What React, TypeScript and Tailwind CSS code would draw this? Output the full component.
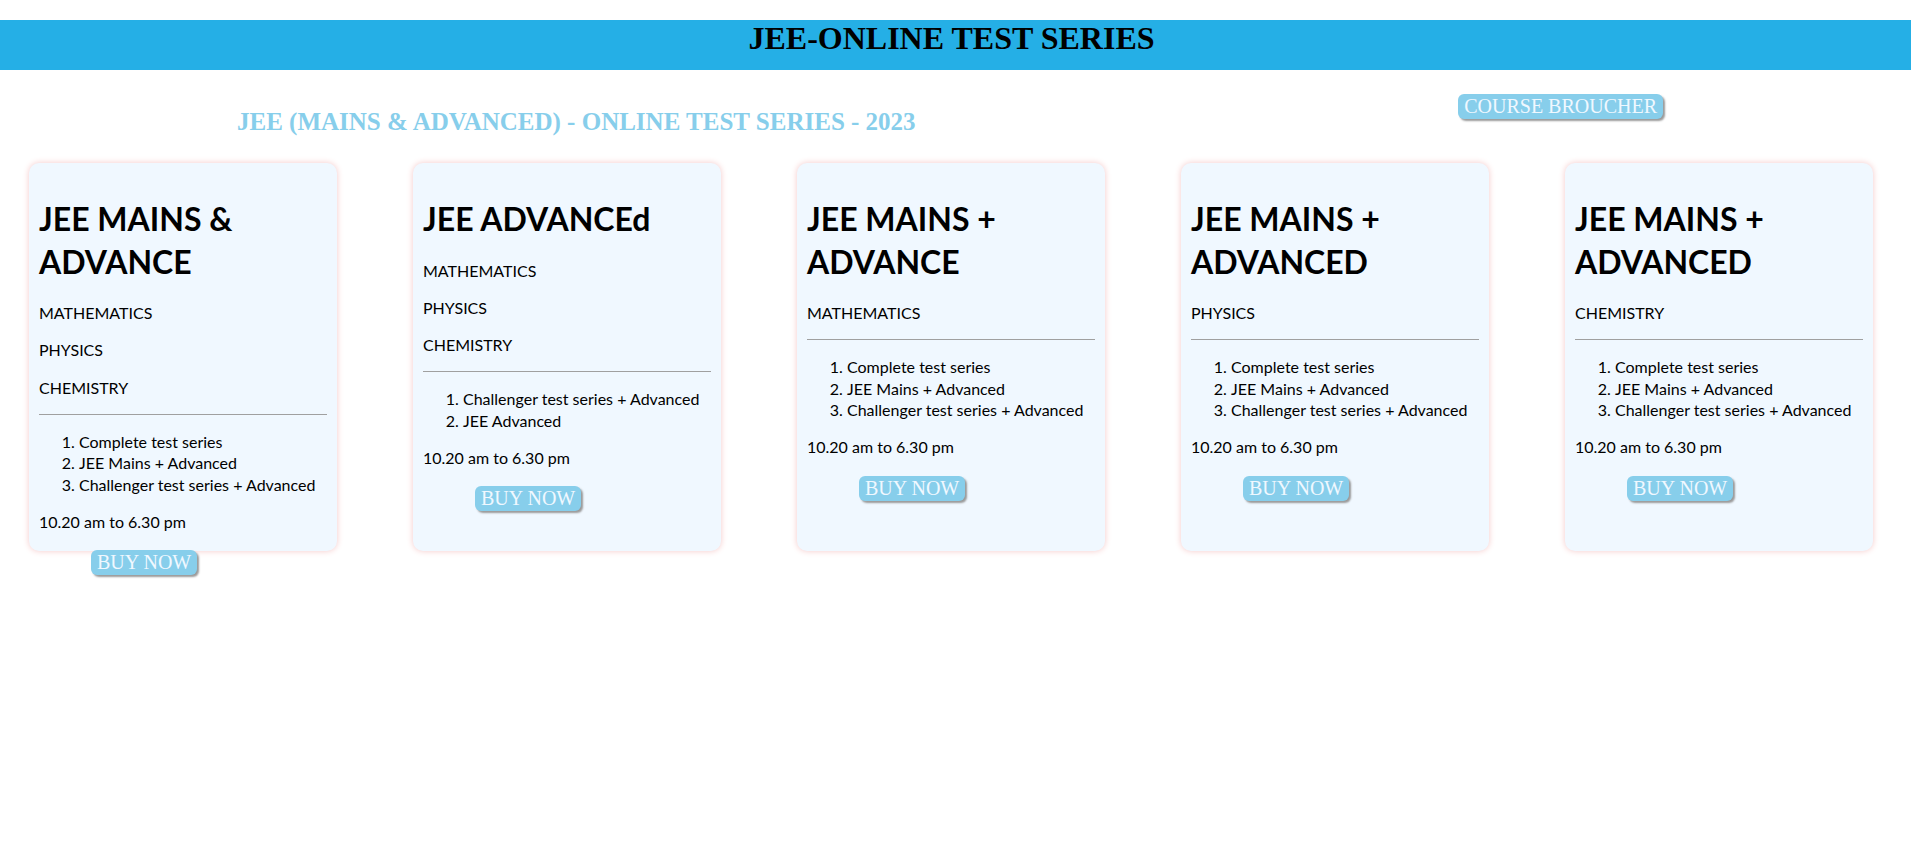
import React from 'react'

type Course = {
  title: string
  subjects: string[]
  items: string[]
}

const fullList = ['Complete test series', 'JEE Mains + Advanced', 'Challenger test series + Advanced']

const courses: Course[] = [
  { title: 'JEE MAINS & ADVANCE', subjects: ['MATHEMATICS', 'PHYSICS', 'CHEMISTRY'], items: fullList },
  {
    title: 'JEE ADVANCEd',
    subjects: ['MATHEMATICS', 'PHYSICS', 'CHEMISTRY'],
    items: ['Challenger test series + Advanced', 'JEE Advanced'],
  },
  { title: 'JEE MAINS + ADVANCE', subjects: ['MATHEMATICS'], items: fullList },
  { title: 'JEE MAINS + ADVANCED', subjects: ['PHYSICS'], items: fullList },
  { title: 'JEE MAINS + ADVANCED', subjects: ['CHEMISTRY'], items: fullList },
]

const SkyButton = ({ label, className = '' }: { label: string; className?: string }) => (
  <button
    className={`rounded-[6px] bg-[#87ceeb] px-[6px] py-[1px] font-['Liberation_Serif',serif] text-[20px] leading-[23px] text-[#f0f8ff] shadow-[2px_2px_2px_#9a9a9a] ${className}`}
  >
    {label}
  </button>
)

const CourseCard = ({ course }: { course: Course }) => (
  <div className="h-[388px] w-[308px] shrink-0 rounded-[10px] bg-[#f0f8ff] p-[10px] shadow-[0_0_6px_#f5c8c8]">
    <h1 className="mt-[25px] mb-[19px] text-[32px] font-bold leading-[42.6px]">{course.title}</h1>
    {course.subjects.map((s) => (
      <p key={s} className="my-4 text-[16px] leading-[21.3px]">
        {s}
      </p>
    ))}
    <hr className="my-2 border-t border-[#a0a0a0]" />
    <ol className="my-4 list-decimal pl-10 text-[16px] leading-[21.3px]">
      {course.items.map((it) => (
        <li key={it}>{it}</li>
      ))}
    </ol>
    <p className="my-4 text-[16px] leading-[21.3px]">10.20 am to 6.30 pm</p>
    <SkyButton label="BUY NOW" className="mt-[18px] ml-[52px] block" />
  </div>
)

export default function App() {
  return (
    <div className="min-h-screen bg-white pt-5 font-['Lato',sans-serif] text-black">
      <div className="h-[50px] bg-[#25afe6]">
        <h1 className="pr-2 text-center font-['Liberation_Serif',serif] text-[32px] font-bold leading-[37px]">
          JEE-ONLINE TEST SERIES
        </h1>
      </div>

      <div className="flex items-start justify-between pt-6 pr-[248px] pl-[237px]">
        <h2 className="mt-[14px] font-['Liberation_Serif',serif] text-[25px] font-bold leading-[28px] text-[#87ceeb]">
          JEE (MAINS &amp; ADVANCED) - ONLINE TEST SERIES - 2023
        </h2>
        <SkyButton label="COURSE BROUCHER" />
      </div>

      <div className="mt-[27px] flex items-start gap-[76px] pl-[29px]">
        {courses.map((c, i) => (
          <CourseCard key={i} course={c} />
        ))}
      </div>
    </div>
  )
}
